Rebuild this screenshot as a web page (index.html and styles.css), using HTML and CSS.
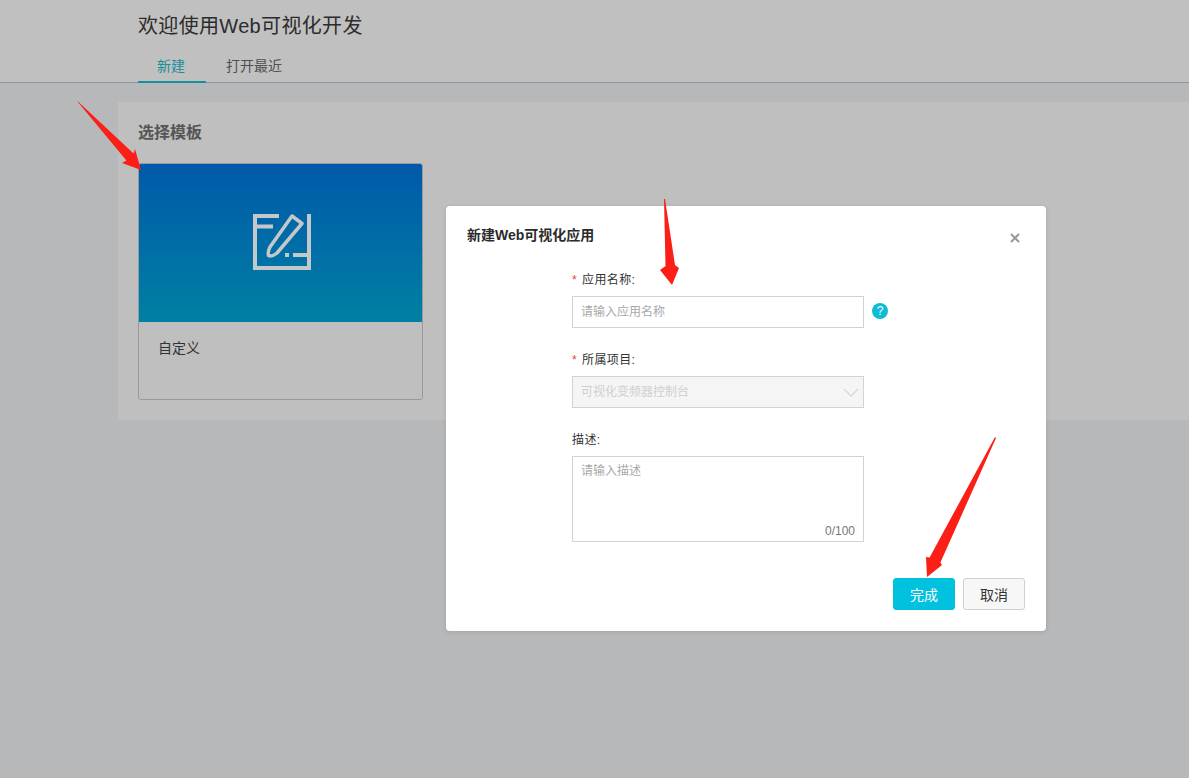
FILE: index.html
```html
<!DOCTYPE html>
<html lang="zh-CN">
<head>
<meta charset="utf-8">
<title>欢迎使用Web可视化开发</title>
<link rel="stylesheet" href="styles.css">
</head>
<body>
<header class="top">
  <h1 class="top-title">欢迎使用Web可视化开发</h1>
  <nav class="tabs">
    <span class="tab tab-active">新建</span>
    <span class="tab">打开最近</span>
  </nav>
</header>
<main class="panel">
  <h2 class="panel-title">选择模板</h2>
  <div class="card">
    <div class="card-cover">
      <svg class="card-icon" width="58" height="56" viewBox="0 0 58 56" fill="none" stroke="#c4c8ca" stroke-width="4">
        <path d="M26 2H2V54H56V0"/>
        <path d="M2 12.500H20"/>
        <path d="M32 41H36M40 41H55"/>
        <path stroke-width="3.500" stroke-linejoin="round" d="M39 2L49 9.500L24 39Q19 43 15.500 41.500Q14.500 38 17 33Z"/>
      </svg>
    </div>
    <div class="card-name">自定义</div>
  </div>
</main>

<section class="dialog">
  <h3 class="dialog-title">新建Web可视化应用</h3>
  <svg class="dialog-close" width="10" height="10" viewBox="0 0 10 10" stroke="#9a9a9a" stroke-width="2"><path d="M1 1L9 9M9 1L1 9"/></svg>
  <form class="form">
    <div class="field">
      <label class="label"><span class="req">*</span>应用名称:</label>
      <div class="control-row">
        <div class="input placeholder">请输入应用名称</div>
        <span class="help">?</span>
      </div>
    </div>
    <div class="field">
      <label class="label"><span class="req">*</span>所属项目:</label>
      <div class="input select">
        <span>可视化变频器控制台</span>
        <svg width="16" height="9" viewBox="0 0 16 9" fill="none" stroke="#d9d9d9" stroke-width="1.500"><path d="M1 1L8 8L15 1"/></svg>
      </div>
    </div>
    <div class="field">
      <label class="label">描述:</label>
      <div class="textarea">
        <span class="placeholder">请输入描述</span>
        <span class="counter">0/100</span>
      </div>
    </div>
  </form>
  <footer class="dialog-foot">
    <button class="btn btn-primary" type="button">完成</button>
    <button class="btn" type="button">取消</button>
  </footer>
</section>

<svg class="arrows" width="1189" height="778" viewBox="0 0 1189 778" fill="#fb1f17">
  <polygon points="77,101 78.500,102 133.600,153.500 135,149 141,170 122,163 126.400,160.500"/>
  <polygon points="664,199 665,199 675,265 679,268 672,285 660,270 665.500,266"/>
  <polygon points="995,437 996,438 940.400,562.600 942,565 927,577 926,557 929.600,557.400"/>
</svg>
</body>
</html>
```
FILE: styles.css
```css
* { box-sizing: border-box; }
html, body { margin: 0; height: 778px; overflow: hidden; }
body {
  position: relative;
  background: #b7b8ba;
  font-family: "Liberation Sans", "Noto Sans CJK SC", sans-serif;
  color: #333;
  font-size: 12px;
}
.top {
  height: 83px;
  padding: 13px 0 0 138px;
  background: #c0c0c0;
  border-bottom: 1px solid #929597;
}
.top-title {
  margin: 0;
  font-size: 20px;
  font-weight: 400;
  line-height: 26px;
  letter-spacing: .33px;
  color: #2c2c2c;
}
.tabs { display: flex; margin-top: 9px; }
.tab {
  width: 76px;
  height: 35px;
  font-size: 14px;
  line-height: 36px;
  color: #4f4f4f;
  text-align: center;
}
.tab-active {
  width: 68px;
  margin-right: 10px;
  padding-right: 2px;
  color: #1a8e9b;
  border-bottom: 2px solid #16909f;
}
.panel {
  margin: 19px 0 0 118px;
  height: 318px;
  padding: 20px;
  background: #bfbfbf;
}
.panel-title {
  margin: 0 0 20px;
  padding-top: 1px;
  font-size: 16px;
  line-height: 20px;
  font-weight: 700;
  color: #555;
}
.card {
  width: 285px;
  height: 237px;
  background: #bfbfbf;
  border: 1px solid #97999a;
  border-radius: 3px;
  overflow: hidden;
}
.card-cover {
  height: 158px;
  display: flex;
  align-items: center;
  justify-content: center;
  background: linear-gradient(180deg, #0059a9 0%, #0080a3 100%);
}
.card-icon { display: block; margin: -2px 0 0 3px; }
.card-name {
  padding: 16px 19px;
  font-size: 14px;
  line-height: 20px;
  color: #333;
}
.dialog {
  position: absolute;
  left: 446px;
  top: 206px;
  width: 600px;
  height: 425px;
  padding: 19px 21px 21px;
  background: #fff;
  border-radius: 4px;
  box-shadow: 0 1px 4px rgba(0, 0, 0, .12);
  display: flex;
  flex-direction: column;
}
.dialog-title {
  margin: 0;
  font-size: 14px;
  line-height: 20px;
  font-weight: 700;
  color: #2b2b2b;
}
.dialog-close { position: absolute; left: 564px; top: 27px; }
.form {
  margin: 27px 0 0 105px;
  display: flex;
  flex-direction: column;
  gap: 24px;
}
.label {
  display: block;
  height: 16px;
  margin-bottom: 8px;
  line-height: 16px;
  letter-spacing: .4px;
  color: #333;
}
.req {
  display: inline-block;
  width: 10px;
  color: #e0472b;
}
.control-row { display: flex; align-items: center; gap: 8px; }
.input {
  width: 292px;
  height: 32px;
  padding: 0 8px;
  line-height: 30px;
  border: 1px solid #d3d3d3;
}
.placeholder { color: #a9a9a9; }
.help {
  width: 16px;
  height: 16px;
  margin-top: -2px;
  border-radius: 50%;
  background: #0fbcd8;
  color: #fff;
  font-size: 12px;
  line-height: 16px;
  text-align: center;
}
.select {
  display: flex;
  align-items: center;
  justify-content: space-between;
  padding-right: 4px;
  background: #f5f5f5;
  color: #cfcfcf;
}
.textarea {
  position: relative;
  width: 292px;
  height: 86px;
  padding: 6px 8px;
  line-height: 16px;
  border: 1px solid #d3d3d3;
}
.counter {
  position: absolute;
  right: 8px;
  bottom: 2px;
  color: #777;
}
.dialog-foot {
  margin-top: 36px;
  display: flex;
  justify-content: flex-end;
  gap: 8px;
}
.btn {
  width: 62px;
  height: 32px;
  padding: 0;
  font: inherit;
  font-size: 14px;
  color: #333;
  background: #f7f7f7;
  border: 1px solid #d0d0d0;
  border-radius: 3px;
}
.btn-primary {
  color: #fff;
  background: #00c1de;
  border-color: #00c1de;
}
.arrows { position: absolute; left: 0; top: 0; pointer-events: none; }
```
